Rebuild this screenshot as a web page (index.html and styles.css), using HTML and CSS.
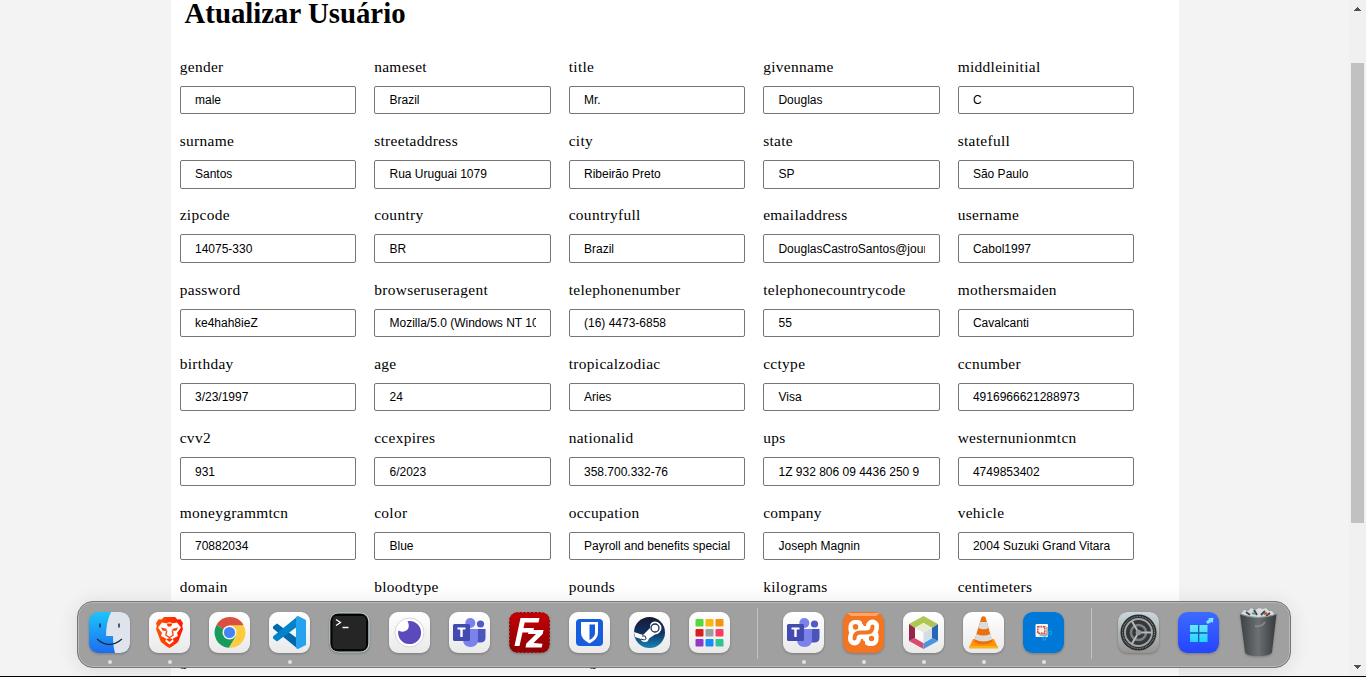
FILE: index.html
```html
<!DOCTYPE html>
<html lang="pt-BR">
<head>
<meta charset="utf-8">
<title>Atualizar Usuário</title>
<link rel="stylesheet" href="styles.css">
</head>
<body>
<div class="screen">
  <main class="page">
    <h1 class="heading">Atualizar Usuário</h1>
    <form class="fields" id="fields"></form>
  </main>
  <aside class="scroll">
    <svg class="arrow" viewBox="0 0 7 4"><path d="M0 4h7V3H6V2H5V1H4V0H3v1H2v1H1v1H0z"/></svg>
    <div class="thumb"></div>
    <svg class="arrow down" viewBox="0 0 7 4"><path d="M0 0h7v1H6v1H5v1H4v1H3V3H2V2H1V1H0z"/></svg>
  </aside>
  <nav class="dock">
    <svg width="0" height="0" class="defs"><defs>
      <linearGradient id="fb" x2="0" y2="1"><stop stop-color="#1bc5fb"/><stop offset="1" stop-color="#1e6cf0"/></linearGradient>
      <linearGradient id="br" x2="1" y2="0"><stop stop-color="#ff5500"/><stop offset="1" stop-color="#ff1800"/></linearGradient>
      <linearGradient id="fz" x2="0" y2="1"><stop stop-color="#c40005"/><stop offset="1" stop-color="#8d0003"/></linearGradient>
      <linearGradient id="ge" x2="0" y2="1"><stop stop-color="#c9d8dd"/><stop offset="1" stop-color="#96948f"/></linearGradient>
      <linearGradient id="st" x2="0" y2="1"><stop stop-color="#171a35"/><stop offset=".5" stop-color="#13305f"/><stop offset="1" stop-color="#1387b8"/></linearGradient>
      <linearGradient id="tr"><stop stop-color="#3c4043"/><stop offset=".5" stop-color="#6b7073"/><stop offset="1" stop-color="#36393c"/></linearGradient>
      <linearGradient id="wi" x2="0" y2="1"><stop stop-color="#6ce6ff"/><stop offset="1" stop-color="#20d4fa"/></linearGradient>
      <linearGradient id="wb" x2="0" y2="1"><stop stop-color="#3b6bff"/><stop offset="1" stop-color="#2544ff"/></linearGradient>
      <symbol id="teams" viewBox="0 0 41 41">
        <circle cx="31.500" cy="12" r="3.600" fill="#5059c9"/><path d="M27 17h9.500v8.500q0 5-5 5H27z" fill="#4b53bc"/>
        <circle cx="21.300" cy="11" r="5" fill="#7b83eb"/><path d="M14 17h15v10q0 8-7.500 8T14 27z" fill="#7b83eb"/>
        <rect x="4" y="12" width="17" height="17" rx="1.500" fill="#434bb0"/>
        <path d="M8.500 15.500h8v2h-2.800V25h-2.400v-7.500H8.500z" fill="#fff"/>
      </symbol>
    </defs></svg>

    <span class="app run"><svg class="icon" viewBox="0 0 41 41"><rect width="41" height="41" rx="9" fill="url(#fb)"/><path d="M22 0h10a9 9 0 0 1 9 9v23a9 9 0 0 1-9 9h-6q-2-7-2-17h-7Q17 10 22 0z" fill="#dfe3ec"/><path d="M11 11.500v4M30 11.500v4" stroke="#173044" stroke-width="1.500"/><path d="M8 27q12 11 25 0" fill="none" stroke="#122c42" stroke-width="1.300"/></svg></span>
    <span class="app run"><svg class="icon light" viewBox="0 0 41 41"><path d="M15 5h11l2.500 2.500 3-.3 2.500 4-.8 2.800.8 3-4.500 12Q28 31.500 20.500 36 13 31.500 11.500 29L7 17l.8-3L7 11.200l2.500-4 3 .3z" fill="url(#br)"/><path d="M13 10.500l4 .8 3.500-1 3.500 1 4-.8 4 5-4 5.500 1 3-5 2.500.5 3-4 3-4-3 .5-3-5-2.500 1-3-4-5.500z" fill="#fff"/><path d="M12 15.500l6 1.500-1.500 2-3-.5zM29 15.500L23 17l1.500 2 3-.5zM17.500 11.500h6l-1.500 3h-3zM18.500 18.500l-1 4.500 3 1.800 3-1.800-1-4.500 1.500 0 .8 5-4.300 2.800-4.300-2.800.8-5zM17 27.300l3.500-1.300 3.500 1.300-3.500 2.700z" fill="#ff3900"/></svg></span>
    <span class="app"><svg class="icon light" viewBox="0 0 41 41"><path d="M20.500 20.500L7.500 13a15.300 15.300 0 0 1 27 0z" fill="#d94f40"/><path d="M20.500 20.500L7.500 13A15.300 15.300 0 0 0 20 35.800L27 24z" fill="#179c59"/><path d="M20.500 13.200H34.600A15.300 15.300 0 0 1 20 35.800l7-11.500z" fill="#ffcb3e"/><circle cx="20.500" cy="20.500" r="7" fill="#f5f5f5"/><circle cx="20.500" cy="20.500" r="5.600" fill="#4385f4"/></svg></span>
    <span class="app run"><svg class="icon light" viewBox="0 0 41 41"><path d="M4 14.500l4-3L29 27v10L4 16.500z" fill="#0069ab"/><path d="M4 26.500l4 3L29 14V4L4 24.500z" fill="#0083ca"/><path d="M29 4l8 4v25l-8 4-2-1V5z" fill="#26a3ee"/></svg></span>
    <span class="app"><svg class="icon" viewBox="0 0 41 41"><rect x=".5" y=".5" width="40" height="40" rx="9" fill="#c1dadf"/><rect x="1.300" y="1.500" width="38" height="38" rx="8" fill="#050505"/><rect x="3.500" y="4" width="33.500" height="33" rx="4" fill="#252525"/><path d="M7 7.500l4.500 3L7 13.500M13.500 15.500h6" fill="none" stroke="#fff" stroke-width="1.300"/></svg></span>
    <span class="app"><svg class="icon light" viewBox="0 0 41 41"><circle cx="20.500" cy="20.500" r="14.500" fill="#fff" stroke="#d5d5d5"/><path d="M18.500 9.300A11.500 11.500 0 1 1 9.300 18.500q2 1.500 5.500 1 5-1 5-6-.1-2.500-1.300-4.200z" fill="#5b4abb"/></svg></span>
    <span class="app"><svg class="icon light" viewBox="0 0 41 41"><use href="#teams"/></svg></span>
    <span class="app"><svg class="icon" viewBox="0 0 41 41"><rect x=".7" y=".7" width="39.600" height="39.600" rx="6" fill="url(#fz)" stroke="#99080b" stroke-width="1.400" stroke-dasharray="2.400 1.400"/><path d="M11.500 6H30.500l-1 4.500H15.700l-1.200 5.500H25l-1 4.500H13.500L10.500 34H5.500z" fill="#fff"/><path d="M20 18h14.500l-.8 4-9.200 9 9 .8-.8 3.700H16.500l.8-4 9.700-9.500H19z" fill="#fff"/></svg></span>
    <span class="app"><svg class="icon light" viewBox="0 0 41 41"><rect x="7" y="7" width="27" height="27" rx="4" fill="#175ddc"/><path d="M12 10h17v11q0 6-8.500 10.500Q12 27 12 21z" fill="#fff"/><path d="M20.500 12.500H26V21q0 4-5.500 7z" fill="#175ddc"/></svg></span>
    <span class="app"><svg class="icon light" viewBox="0 0 41 41"><circle cx="20.500" cy="20.500" r="15.500" fill="url(#st)"/><path d="M5 20l9 3 7-7q-.5-6.500 5-6.500a6.500 6.500 0 0 1 0 13l-6 4q-1 4-4.500 3.500T12 27l-6-2z" fill="#fff"/><circle cx="26" cy="16" r="4" fill="#fff" stroke="#192b50" stroke-width="1.300"/><path d="M12 27q5 2 5-1t-4-2" fill="none" stroke="#192b50"/></svg></span>
    <span class="app"><svg class="icon light" viewBox="0 0 41 41"><g><rect x="6.500" y="7" width="8" height="7.500" rx="1" fill="#54d939"/><rect x="16.500" y="7" width="8" height="7.500" rx="1" fill="#f8b90f"/><rect x="26.500" y="7" width="8" height="7.500" rx="1" fill="#f39411"/><rect x="6.500" y="17" width="8" height="7.500" rx="1" fill="#d91e1b"/><rect x="16.500" y="17" width="8" height="7.500" rx="1" fill="#99a0a2"/><rect x="26.500" y="17" width="8" height="7.500" rx="1" fill="#fa3d61"/><rect x="6.500" y="27" width="8" height="7.500" rx="1" fill="#9039c8"/><rect x="16.500" y="27" width="8" height="7.500" rx="1" fill="#168df5"/><rect x="26.500" y="27" width="8" height="7.500" rx="1" fill="#30c494"/></g></svg></span>
    <i class="sep first"></i>
    <span class="app run"><svg class="icon light" viewBox="0 0 41 41"><use href="#teams"/></svg></span>
    <span class="app run"><svg class="icon" viewBox="0 0 41 41"><rect width="41" height="41" rx="9" fill="#f37421"/><path d="M4 1h33l-4 3H8z" fill="#f9a56d"/><g fill="none" stroke-linecap="round" stroke-linejoin="round"><path d="M12 14.500h2q2 6 6.500 6M11.500 27q0-6.500 6-6.500h6q6 0 6-6.500M29 27.500h-2.500M17 20.500q-6 0-5-6M24 20.500q6 0 5 6" stroke="#fff" stroke-width="13"/><path d="M11.500 26.500q0-6 6-6h6q6 0 6-6" stroke="#f37421" stroke-width="4"/><path d="M12.500 14.800v.1M28.500 26.500v.1" stroke="#f37421" stroke-width="5.500"/><path d="M20.500 7v4M20.500 34v-4" stroke="#f37421" stroke-width="3"/></g></svg></span>
    <span class="app run"><svg class="icon light" viewBox="0 0 41 41"><path d="M20.500 4L35 12l-6 4-8.500-5L12 16l-6-4z" fill="#afc750"/><path d="M6 12l6 4v10l-6 3z" fill="#95254a"/><path d="M6 29l6-3 8.500 5v6z" fill="#db4a6c"/><path d="M35 12l-6 4v10l6 3z" fill="#2a65b7"/><path d="M35 29l-6-3-8.500 5v6z" fill="#4b94df"/><path d="M20.500 11l8.500 5v10l-8.500 5-8.500-5V16z" fill="#fafafa"/><path d="M20.500 11l8.500 5-8.500 4.500L12 16z" fill="#e8edcf"/><path d="M20.500 20.500L29 16v10l-8.500 5z" fill="#d4dce5"/></svg></span>
    <span class="app run"><svg class="icon light" viewBox="0 0 41 41"><path d="M10 27h21l4 9H6z" fill="#ff9208"/><path d="M6 34h29v2.500H6z" fill="#f7b319"/><path d="M18.500 5q2-1.500 4 0l7 25q-9 5-18.500 0z" fill="#ee6f08"/><path d="M17.200 10h6.600l1.800 6q-5 2.500-10.200 0zM13.500 22q7 3 14 0l1.600 5.500q-8.500 4-17.200 0z" fill="#d9dcdf"/></svg></span>
    <span class="app run"><svg class="icon" viewBox="0 0 41 41"><rect width="41" height="41" rx="9" fill="#0078d7"/><rect x="12.500" y="12" width="12.500" height="13" rx="1" fill="#f4f4f4"/><rect x="14.800" y="14.800" width="7" height="6.500" fill="none" stroke="#df4d33" stroke-width="1.500" stroke-dasharray="2 .6"/><path d="M16.500 23h7.500v-8" fill="none" stroke="#8f979c" stroke-width="1.300"/><g fill="none" stroke="#169de1" stroke-width="1.200"><circle cx="21.500" cy="26.500" r="1.600"/><circle cx="27" cy="21" r="1.600"/></g></svg></span>
    <i class="sep second"></i>
    <span class="app"><svg class="icon" viewBox="0 0 41 41"><rect width="41" height="41" rx="9" fill="url(#ge)"/><circle cx="20.500" cy="20.500" r="18" fill="#2b2d2e"/><circle cx="20.500" cy="20.500" r="16" fill="none" stroke="#85898b" stroke-width="1.200" stroke-dasharray=".8 .8"/><circle cx="20.500" cy="20.500" r="13.500" fill="#35383a" stroke="#a0a4a5" stroke-width="1.900"/><circle cx="20.500" cy="20.500" r="7.500" fill="none" stroke="#7c8082" stroke-width="2.500"/><path d="M20.500 20.500h13.500M20.500 20.500L13.800 9M20.500 20.500L13.800 32" stroke="#b5b8b9" stroke-width="2"/><circle cx="20.500" cy="20.500" r="2.800" fill="#929698"/></svg></span>
    <span class="app"><svg class="icon" viewBox="0 0 41 41"><rect width="41" height="41" rx="9" fill="url(#wb)"/><path d="M12 13h17.500v17H12z" fill="url(#wi)"/><path d="M20.700 13v17M12 21h17.500" stroke="#1557ba" stroke-width="1.300"/><path d="M28 9.500l3-2-.8-1.300 5.300-.4-.6 5-1.400-.9-4 2z" fill="#7ce4ff"/></svg></span>
    <span class="app"><svg class="icon bin" viewBox="0 0 41 49"><path d="M3 6l3-4 4 1 3-3 4 2 4-2 4 1 3-1 3 3 3 0 3 4-3 4H6z" fill="#d9dcdf"/><path d="M8 4l4 3M16 2l3 5M27 3l-4 4M32 5l-4 3" stroke="#4b4642" stroke-width="2"/><path d="M14 5l3 1" stroke="#3aa8c0" stroke-width="2"/><path d="M26 6l3-1" stroke="#b65637" stroke-width="2"/><path d="M2 6q18 7 36.500 0L34 44q-1 4-14 4T7 44z" fill="url(#tr)"/><path d="M2 6q18 7 36.500 0" fill="none" stroke="#8c9093" stroke-width="1.200"/><path d="M17 18q7 1 10-4" fill="none" stroke="#989c9f" stroke-width="2" opacity=".6"/></svg></span>
  </nav>
</div>
<script src="fields.js"></script>
</body>
</html>
```
FILE: fields.js
```js
const record = [
  ["gender", "male"], ["nameset", "Brazil"], ["title", "Mr."], ["givenname", "Douglas"], ["middleinitial", "C"],
  ["surname", "Santos"], ["streetaddress", "Rua Uruguai 1079"], ["city", "Ribeirão Preto"], ["state", "SP"], ["statefull", "São Paulo"],
  ["zipcode", "14075-330"], ["country", "BR"], ["countryfull", "Brazil"], ["emailaddress", "DouglasCastroSantos@jourrapide.com"], ["username", "Cabol1997"],
  ["password", "ke4hah8ieZ"], ["browseruseragent", "Mozilla/5.0 (Windows NT 10.0; Win64; x64)"], ["telephonenumber", "(16) 4473-6858"], ["telephonecountrycode", "55"], ["mothersmaiden", "Cavalcanti"],
  ["birthday", "3/23/1997"], ["age", "24"], ["tropicalzodiac", "Aries"], ["cctype", "Visa"], ["ccnumber", "4916966621288973"],
  ["cvv2", "931"], ["ccexpires", "6/2023"], ["nationalid", "358.700.332-76"], ["ups", "1Z 932 806 09 4436 250 9"], ["westernunionmtcn", "4749853402"],
  ["moneygrammtcn", "70882034"], ["color", "Blue"], ["occupation", "Payroll and benefits special"], ["company", "Joseph Magnin"], ["vehicle", "2004 Suzuki Grand Vitara"],
  ["domain", ""], ["bloodtype", ""], ["pounds", ""], ["kilograms", ""], ["centimeters", ""],
  ["guid", ""], ["latitude", ""], ["longitude", ""]
];
const form = document.getElementById("fields");
for (const [name, value] of record) {
  const label = document.createElement("label");
  label.className = "field";
  const caption = document.createElement("span");
  caption.className = "caption";
  caption.textContent = name;
  const input = document.createElement("input");
  input.className = "control";
  input.value = value;
  label.append(caption, input);
  form.append(label);
}
```
FILE: styles.css
```css
* { box-sizing: border-box; }
body { margin: 0; overflow: hidden; background: #f3f3f3; }
.screen { position: relative; display: flex; justify-content: space-between; height: 677px; overflow: hidden; border-bottom: 1px solid #000; }
.page { width: 1008px; height: 677px; margin-left: 171px; padding: 0 0 0 9px; background: #fff; overflow: hidden; font-family: "Liberation Serif", "Times New Roman", serif; }
.heading { margin: 0 0 0 4.500px; font-size: 28.800px; line-height: 26px; font-weight: bold; }
.fields { display: grid; grid-template-columns: repeat(5, 176.400px); column-gap: 18.100px; grid-auto-rows: 74.320px; padding-top: 31.800px; }
.field { display: flex; flex-direction: column; }
.caption { height: 28px; margin-left: -.3px; line-height: 18px; font-size: 15.400px; letter-spacing: .33px; color: #000; white-space: nowrap; }
.control { width: 100%; height: 28.400px; margin: 0; padding: 0 14px; border: 1px solid #767676; border-radius: 2px; background: #fff; color: #000; font: 12px "Liberation Sans", Arial, sans-serif; }
.scroll { display: flex; flex-direction: column; align-items: center; width: 17px; height: 676px; padding: 7px 0 7px; background: #f0f0f0; }
.arrow { width: 7px; height: 4px; fill: #505050; }
.thumb { width: 13px; height: 460px; margin-top: 52px; background: #c1c1c1; }
.down { margin-top: auto; }
.dock { position: absolute; left: 77px; top: 601px; display: flex; width: 1214px; height: 67px; padding: 10px 0 0 11px; border: 1px solid #777; border-radius: 16px; background: #a0a0a0; box-shadow: inset 0 0 0 1px #b8b8b8, 0 2px 20px rgba(0,0,0,.1); }
.defs { position: absolute; }
.app { flex: none; display: flex; flex-direction: column; align-items: center; gap: 7px; width: 41px; margin-right: 19px; height: 54px; }
.run::after { content: ""; width: 4px; height: 4px; border-radius: 2px; background: #e0e0e0; }
.icon { flex: none; width: 41px; height: 41px; border-radius: 9px; filter: drop-shadow(0 1px 1px rgba(0,0,0,.25)); }
.light { background: linear-gradient(#fff, #e9e9e9); }
.bin { height: 49px; margin-top: -4px; border-radius: 0; }
.sep { flex: none; width: 1px; height: 51px; margin-top: -4px; background: #c2c2c2; }
.first { margin-left: 8px; margin-right: 25px; }
.second { margin-left: 8px; margin-right: 26px; }
```
